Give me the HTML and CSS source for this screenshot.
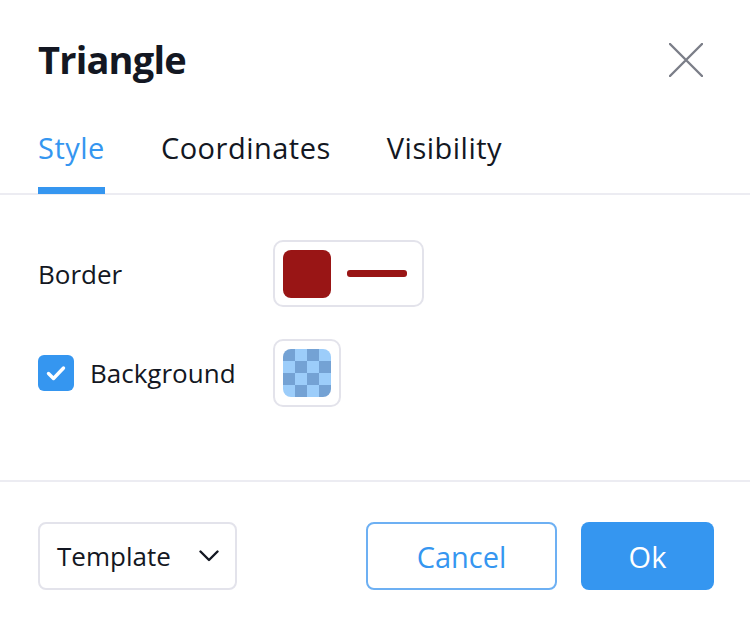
FILE: index.html
```html
<!DOCTYPE html>
<html lang="en">
<head>
<meta charset="utf-8">
<title>Triangle</title>
<link rel="stylesheet" href="styles.css">
</head>
<body>
<div class="dialog">
  <div class="header">
    <h1 class="title">Triangle</h1>
    <button class="close" aria-label="Close">
      <svg width="34" height="34" viewBox="0 0 34 34"><path d="M1 1 L33 33 M33 1 L1 33" stroke="#7b7e88" stroke-width="2.4" stroke-linecap="round" fill="none"/></svg>
    </button>
  </div>
  <div class="tabs">
    <div class="tab active">Style</div>
    <div class="tab">Coordinates</div>
    <div class="tab">Visibility</div>
  </div>
  <div class="content">
    <div class="row">
      <div class="label">Border</div>
      <div class="swatch wide">
        <span class="color red"></span>
        <span class="line"></span>
      </div>
    </div>
    <div class="row">
      <div class="label">
        <span class="checkbox">
          <svg width="36" height="36" viewBox="0 0 36 36"><path d="M10.5 18.5 L15.5 23.5 L25.5 13" stroke="#fff" stroke-width="3.4" stroke-linecap="round" stroke-linejoin="round" fill="none"/></svg>
        </span>
        Background
      </div>
      <div class="swatch">
        <span class="color checker">
          <i class="d"></i><i></i><i class="d"></i><i></i>
          <i></i><i class="d"></i><i></i><i class="d"></i>
          <i class="d"></i><i></i><i class="d"></i><i></i>
          <i></i><i class="d"></i><i></i><i class="d"></i>
        </span>
      </div>
    </div>
  </div>
  <div class="footer">
    <button class="select">Template
      <svg width="20" height="12" viewBox="0 0 20 12"><path d="M1.5 1.5 L10 10 L18.5 1.5" stroke="#131722" stroke-width="2.4" stroke-linecap="round" stroke-linejoin="round" fill="none"/></svg>
    </button>
    <div class="actions">
      <button class="btn cancel">Cancel</button>
      <button class="btn ok">Ok</button>
    </div>
  </div>
</div>
</body>
</html>
```
FILE: styles.css
```css
* { box-sizing: border-box; }
html, body { margin: 0; padding: 0; background: #fff; }
body {
  font-family: "Open Sans", "Noto Sans", sans-serif;
  color: #131722;
  width: 750px;
  height: 624px;
  overflow: hidden;
}
.dialog { display: flex; flex-direction: column; }

.header {
  display: flex;
  justify-content: space-between;
  align-items: center;
  padding: 34px 47px 0 38px;
  height: 84px;
}
.title {
  margin: 0;
  font-size: 38px;
  line-height: 48px;
  font-weight: 700;
  letter-spacing: -0.8px;
}
.close {
  border: 0;
  background: none;
  padding: 0;
  width: 34px;
  height: 34px;
  display: flex;
  margin-top: 2px;
}

.tabs {
  display: flex;
  gap: 56px;
  padding: 0 38px;
  margin-top: 44px;
  border-bottom: 2px solid #ececf2;
}
.tab {
  font-size: 29px;
  letter-spacing: 0.5px;
  line-height: 40px;
  padding-bottom: 19px;
  border-bottom: 7px solid transparent;
  margin-bottom: -1px;
}
.tab.active {
  color: #3596f0;
  border-bottom-color: #3596f0;
}

.content {
  padding: 45px 38px 73px;
  display: flex;
  flex-direction: column;
  gap: 32px;
  border-bottom: 2px solid #ececf2;
}
.row {
  display: grid;
  grid-template-columns: 235px auto;
  align-items: center;
  justify-items: start;
}
.label {
  font-size: 26px;
  display: flex;
  align-items: center;
  gap: 16px;
}
.checkbox {
  width: 36px;
  height: 36px;
  border-radius: 6px;
  background: #3596f0;
  display: flex;
}
.swatch {
  height: 68px;
  border: 2px solid #e3e3eb;
  border-radius: 10px;
  padding: 8px;
  display: flex;
  align-items: center;
  gap: 16px;
}
.swatch.wide { width: 151px; height: 67px; }
.color {
  width: 48px;
  height: 48px;
  border-radius: 8px;
  display: block;
}
.red { background: #991515; }
.line {
  width: 60px;
  height: 7px;
  border-radius: 3px;
  background: #991515;
}
.checker {
  display: grid;
  grid-template-columns: repeat(4, 12px);
  grid-template-rows: repeat(4, 12px);
  overflow: hidden;
}
.checker i { background: #9ccdfa; }
.checker i.d { background: #74a2d4; }

.footer {
  display: flex;
  justify-content: space-between;
  padding: 40px 36px 0 38px;
}
button { font-family: inherit; cursor: pointer; }
.select {
  width: 199px;
  height: 68px;
  border: 2px solid #e3e3eb;
  border-radius: 8px;
  background: #fff;
  display: flex;
  align-items: center;
  justify-content: space-between;
  padding: 0 16px 0 17px;
  font-size: 26px;
  color: #131722;
}
.actions { display: flex; gap: 24px; }
.btn {
  height: 68px;
  border-radius: 8px;
  font-size: 29px;
}
.cancel {
  width: 191px;
  border: 2px solid #6db0f3;
  background: #fff;
  color: #3596f0;
}
.ok {
  width: 133px;
  border: 0;
  background: #3596f0;
  color: #fff;
}
```
